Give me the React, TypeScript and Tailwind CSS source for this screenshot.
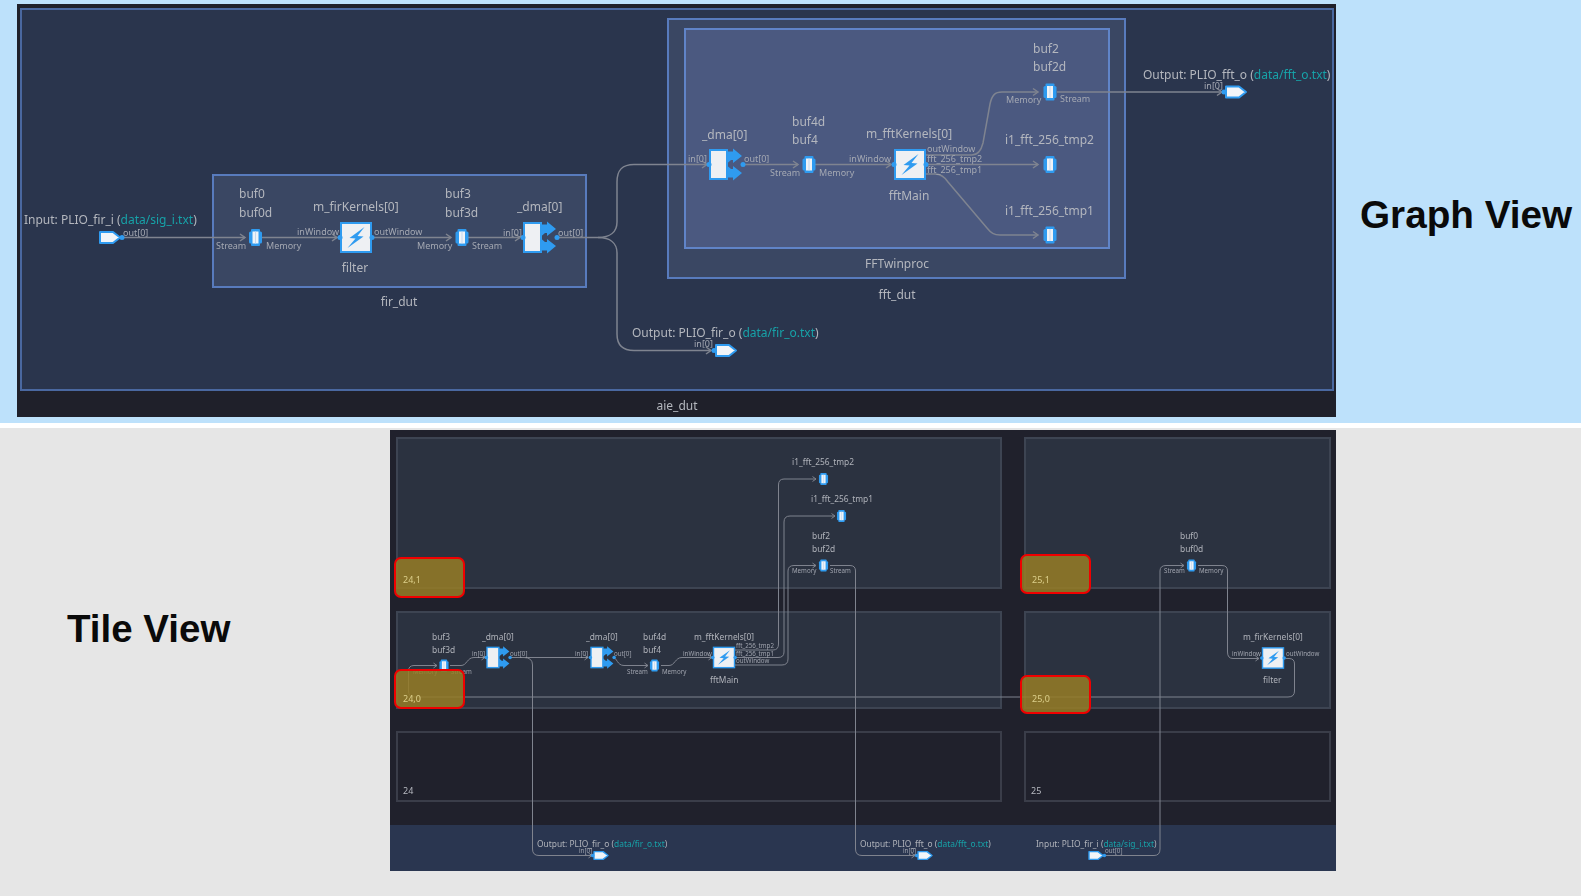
import React from "react";

type O = { x: number; y: number };
const GO: O = { x: 17, y: 4 };
const TO: O = { x: 390, y: 430 };
const BLUE = "#2f9bf0";

function Buffer({ x, y, s = 1 }: { x: number; y: number; s?: number }) {
  return (
    <g transform={`translate(${x} ${y}) scale(${s})`}>
      <rect x={-6.5} y={-6} width={13} height={12} rx={1.5} fill={BLUE} />
      <rect x={-4.5} y={-8.5} width={9} height={17} rx={1} fill={BLUE} />
      <rect x={-3} y={-6} width={6} height={12} fill="#eef3f8" />
      <rect x={-0.5} y={-6} width={1} height={12} fill="#c3d8ee" />
    </g>
  );
}

function Kernel({ x, y, s = 1 }: { x: number; y: number; s?: number }) {
  return (
    <g transform={`translate(${x} ${y}) scale(${s})`}>
      <rect x={-15} y={-14.5} width={30} height={29} fill="#eef0f3" stroke={BLUE} strokeWidth={2} />
      <path d="M8.5 -10.5 L-6.5 0.5 L-0.5 1 L-8.5 10.5 L7.5 -1 L1.5 -1.5 L8.5 -10.5 Z" fill={BLUE} />
      <circle cx={-16} cy={0} r={2.5} fill={BLUE} />
      <circle cx={16} cy={0} r={2.5} fill={BLUE} />
    </g>
  );
}

function Dma({ x, y, s = 1 }: { x: number; y: number; s?: number }) {
  return (
    <g transform={`translate(${x} ${y}) scale(${s})`}>
      <rect x={0} y={-14.5} width={17} height={29} fill="#eef0f3" stroke={BLUE} strokeWidth={2} />
      <circle cx={-1} cy={0} r={2.5} fill={BLUE} />
      <polygon points="17,-13 23,-13 23,-16 32,-8.5 23,-1.5 23,-4.5 21,-4.5 17,-1" fill={BLUE} />
      <polygon points="17,13 23,13 23,16 32,8.5 23,1.5 23,4.5 21,4.5 17,1" fill={BLUE} />
      <circle cx={33} cy={0} r={2.5} fill={BLUE} />
    </g>
  );
}

function Port({ x, y, s = 1, dir }: { x: number; y: number; s?: number; dir: "in" | "out" }) {
  return (
    <g transform={`translate(${x} ${y}) scale(${s})`}>
      <polygon points="0,-5.5 13,-5.5 20,0 13,5.5 0,5.5" fill="#f2f5f8" stroke={BLUE} strokeWidth={2} strokeLinejoin="round" />
      {dir === "in" ? <circle cx={22} cy={0} r={2.5} fill={BLUE} /> : <circle cx={-2} cy={0} r={2.5} fill={BLUE} />}
    </g>
  );
}

function Chev({ x, y, s = 1 }: { x: number; y: number; s?: number }) {
  return <path d={`M${x - 5 * s} ${y - 3.5 * s} L${x} ${y} L${x - 5 * s} ${y + 3.5 * s}`} fill="none" />;
}

function L({ t, x, y, o, cls, center }: { t: React.ReactNode; x: number; y: number; o: O; cls: string; center?: boolean }) {
  return (
    <div
      className={`absolute whitespace-nowrap leading-none ${cls}`}
      style={{ left: x - o.x, top: y - o.y, transform: center ? "translate(-50%,-50%)" : "translateY(-50%)" }}
    >
      {t}
    </div>
  );
}

function Frame({ x1, y1, x2, y2, o, cls }: { x1: number; y1: number; x2: number; y2: number; o: O; cls: string }) {
  return (
    <div
      className={`absolute border-2 ${cls}`}
      style={{ left: x1 - o.x, top: y1 - o.y, width: x2 - x1, height: y2 - y1 }}
    />
  );
}

function Pl({ a, b }: { a: string; b: string }) {
  return (
    <>
      {a} (<span className="text-[#17a2a8]">{b}</span>)
    </>
  );
}

const gBig: [string, number, number][] = [
  ["buf0", 239, 194], ["buf0d", 239, 213], ["m_firKernels[0]", 313, 207], ["buf3", 445, 194], ["buf3d", 445, 213],
  ["_dma[0]", 517, 207], ["_dma[0]", 702, 135], ["buf4d", 792, 122], ["buf4", 792, 140], ["m_fftKernels[0]", 866, 134],
  ["buf2", 1033, 49], ["buf2d", 1033, 67], ["i1_fft_256_tmp2", 1005, 140], ["i1_fft_256_tmp1", 1005, 211],
];
const gMid: [string, number, number][] = [
  ["filter", 355, 268], ["fir_dut", 399, 302], ["fftMain", 909, 196], ["FFTwinproc", 897, 264], ["fft_dut", 897, 295], ["aie_dut", 677, 406],
];
const gSmall: [string, number, number][] = [
  ["out[0]", 123, 232], ["Stream", 216, 245], ["Memory", 266, 245], ["inWindow", 297, 231], ["outWindow", 374, 231],
  ["Memory", 417, 245], ["Stream", 472, 245], ["in[0]", 503, 232], ["out[0]", 558, 232], ["in[0]", 694, 343],
  ["in[0]", 688, 158], ["out[0]", 744, 158], ["Stream", 770, 172], ["Memory", 819, 172], ["inWindow", 849, 158],
  ["outWindow", 927, 148], ["fft_256_tmp2", 927, 158], ["fft_256_tmp1", 927, 169], ["Memory", 1006, 99], ["Stream", 1060, 98], ["in[0]", 1204, 85],
];
const tBig: [string, number, number][] = [
  ["buf3", 432, 637], ["buf3d", 432, 650], ["_dma[0]", 482, 637], ["_dma[0]", 586, 637], ["buf4d", 643, 637], ["buf4", 643, 650],
  ["m_fftKernels[0]", 694, 637], ["fftMain", 710, 680], ["i1_fft_256_tmp2", 792, 462], ["i1_fft_256_tmp1", 811, 499],
  ["buf2", 812, 536], ["buf2d", 812, 549], ["buf0", 1180, 536], ["buf0d", 1180, 549], ["m_firKernels[0]", 1243, 637], ["filter", 1263, 680],
];
const tSmall: [string, number, number][] = [
  ["Memory", 413, 672], ["Stream", 451, 672], ["in[0]", 472, 654], ["out[0]", 510, 654], ["in[0]", 575, 654], ["out[0]", 614, 654],
  ["Stream", 627, 672], ["Memory", 662, 672], ["inWindow", 683, 654], ["fft_256_tmp2", 736, 646], ["fft_256_tmp1", 736, 654], ["outWindow", 736, 661],
  ["Memory", 792, 571], ["Stream", 830, 571], ["Stream", 1164, 571], ["Memory", 1199, 571], ["inWindow", 1232, 654], ["outWindow", 1286, 654],
  ["in[0]", 579, 851], ["in[0]", 903, 851], ["out[0]", 1105, 851],
];

function GraphWires() {
  return (
    <svg className="absolute inset-0" width={1319} height={413} viewBox="17 4 1319 413">
      <g fill="none" stroke="#7f8490" strokeWidth={1.5}>
        <path d="M121 237.5 H245" />
        <path d="M261 237.5 H337" />
        <path d="M373 237.5 H451" />
        <path d="M468 237.5 H520" />
        <path d="M556 237.5 H598 C610 237.5 617 232 617 222 V182 C617 170 622 164.5 634 164.5 H707" />
        <path d="M598 237.5 C610 237.5 617 243 617 253 V334 C617 345 622 350.5 634 350.5 H711" />
        <path d="M742 164.5 H798" />
        <path d="M815 164.5 H891" />
        <path d="M925 155 H972 C978 155 981 151 983 143 L990 104 C992 95 995 92 1002 92 H1038" />
        <path d="M925 164.5 H1038" />
        <path d="M925 174 H935 C940 174 944 176 948 182 L987 228 C991 233 994 235 1000 235 H1038" />
        <path d="M1057 92 H1222" />
        <Chev x={245} y={237.5} />
        <Chev x={337} y={237.5} />
        <Chev x={451} y={237.5} />
        <Chev x={520} y={237.5} />
        <Chev x={707} y={164.5} />
        <Chev x={711} y={350.5} />
        <Chev x={798} y={164.5} />
        <Chev x={891} y={164.5} />
        <Chev x={1038} y={92} />
        <Chev x={1038} y={164.5} />
        <Chev x={1038} y={235} />
        <Chev x={1222} y={92} />
      </g>
      <Port x={100} y={237.5} dir="in" />
      <Buffer x={255.5} y={237.5} />
      <Kernel x={356} y={237.5} />
      <Buffer x={462} y={237.5} />
      <Dma x={524} y={237.5} />
      <Dma x={710} y={164.5} />
      <Buffer x={809} y={164.5} />
      <Kernel x={910} y={164.5} />
      <Buffer x={1050} y={92} />
      <Buffer x={1050} y={164.5} />
      <Buffer x={1050} y={235} />
      <Port x={1226} y={92} dir="out" />
      <Port x={716} y={350.5} dir="out" />
    </svg>
  );
}

function TileWires() {
  return (
    <svg className="absolute inset-0" width={946} height={441} viewBox="390 430 946 441">
      <g fill="none" stroke="#7f838e" strokeWidth={1}>
        <path d="M1286 658.5 H1289 Q1294.5 658.5 1294.5 664 V691 Q1294.5 697 1288 697 H414 Q408.5 697 408.5 691 V671 Q408.5 665.5 414 665.5 H437" />
        <path d="M450 665.5 H461 C467 665.5 467 657.5 474 657.5 H485" />
        <path d="M509 657.5 H588" />
        <path d="M524 657.5 Q532.5 657.5 532.5 665 V849 Q532.5 855.5 539 855.5 H592" />
        <path d="M613 657.5 C617 657.5 617 665.5 624 665.5 H648" />
        <path d="M661 665.5 H669 C675 665.5 675 657.5 682 657.5 H712" />
        <path d="M735 650 H773 Q778.5 650 778.5 644 V485 Q778.5 479 784 479 H816" />
        <path d="M735 657.5 H778 Q784 657.5 784 652 V522 Q784 516 790 516 H835" />
        <path d="M735 665 H782 Q788 665 788 659 V571 Q788 565.5 794 565.5 H816" />
        <path d="M830 565.5 H850 Q855.5 565.5 855.5 571 V849 Q855.5 855.5 862 855.5 H915" />
        <path d="M1104 855.5 H1154 Q1160 855.5 1160 849 V571 Q1160 565.5 1166 565.5 H1184" />
        <path d="M1198 565.5 H1222 Q1227.5 565.5 1227.5 571 V652 Q1227.5 658.5 1233 658.5 H1259" />
        <Chev x={437} y={665.5} s={0.7} />
        <Chev x={485} y={657.5} s={0.7} />
        <Chev x={588} y={657.5} s={0.7} />
        <Chev x={592} y={855.5} s={0.7} />
        <Chev x={648} y={665.5} s={0.7} />
        <Chev x={712} y={657.5} s={0.7} />
        <Chev x={816} y={479} s={0.7} />
        <Chev x={835} y={516} s={0.7} />
        <Chev x={816} y={565.5} s={0.7} />
        <Chev x={915} y={855.5} s={0.7} />
        <Chev x={1184} y={565.5} s={0.7} />
        <Chev x={1259} y={658.5} s={0.7} />
      </g>
      <Buffer x={444} y={665.5} s={0.7} />
      <Dma x={487} y={657.5} s={0.7} />
      <Dma x={591} y={657.5} s={0.7} />
      <Buffer x={654.5} y={665.5} s={0.7} />
      <Kernel x={724} y={657.5} s={0.7} />
      <Buffer x={823.5} y={479} s={0.7} />
      <Buffer x={841.5} y={516} s={0.7} />
      <Buffer x={823.5} y={565.5} s={0.7} />
      <Buffer x={1191.5} y={565.5} s={0.7} />
      <Kernel x={1273} y={658} s={0.7} />
      <Port x={1089} y={855.5} s={0.7} dir="in" />
      <Port x={594} y={855.5} s={0.7} dir="out" />
      <Port x={918} y={855.5} s={0.7} dir="out" />
    </svg>
  );
}

function Highlight({ x1, y1, x2, y2, label, cls }: { x1: number; y1: number; x2: number; y2: number; label: string; cls: string }) {
  return (
    <div
      className={`absolute flex items-end border-[2.5px] border-[#f00000] rounded-[7px] bg-[#977d26]/85 text-[9px] leading-none text-[#dccf8a] ${cls}`}
      style={{ left: x1 - TO.x, top: y1 - TO.y, width: x2 - x1, height: y2 - y1 }}
    >
      {label}
    </div>
  );
}

function Tile({ label, dark }: { label?: string; dark?: boolean }) {
  return (
    <div
      className={
        dark
          ? "flex items-end border-2 border-[#3a3d49] bg-[#20212c] pl-[5px] pb-[5px] text-[9px] leading-none text-[#b6b9c0]"
          : "flex items-end border-2 border-[#3d4452] bg-[#2b3240] pl-[5px] pb-[5px] text-[9px] leading-none text-[#b6b9c0]"
      }
    >
      {label}
    </div>
  );
}

export default function App() {
  return (
    <div className="flex h-[896px] w-[1581px] flex-col bg-white font-['Noto_Sans',sans-serif]">
      <section className="flex h-[423px] items-start bg-[#bde1fb] pl-[17px] pt-[4px]">
        <div className="relative flex h-[413px] w-[1319px] flex-col bg-[#1f202a] text-[#b4b7be] blur-[0.6px]">
          <div className="ml-[3px] mr-[2px] mt-[4px] h-[383px] border-2 border-[#4a68a0] bg-[#2a354d]" />
          <Frame x1={212} y1={174} x2={587} y2={288} o={GO} cls="border-[#587bbd] bg-[#3a4763]" />
          <Frame x1={667} y1={18} x2={1126} y2={279} o={GO} cls="border-[#587bbd] bg-[#3a4763]" />
          <Frame x1={684} y1={28} x2={1110} y2={249} o={GO} cls="border-[#6084c8] bg-[#4b5980]" />
          <GraphWires />
          {gBig.map(([t, x, y], i) => (
            <L key={i} t={t} x={x} y={y} o={GO} cls="text-[12px] text-[#b4b7be]" />
          ))}
          {gMid.map(([t, x, y], i) => (
            <L key={i} t={t} x={x} y={y} o={GO} center cls="text-[12px] text-[#b4b7be]" />
          ))}
          {gSmall.map(([t, x, y], i) => (
            <L key={i} t={t} x={x} y={y} o={GO} cls="text-[9px] text-[#a4a8b2]" />
          ))}
          <L t={<Pl a="Input: PLIO_fir_i" b="data/sig_i.txt" />} x={24} y={220} o={GO} cls="text-[12px] text-[#b4b7be]" />
          <L t={<Pl a="Output: PLIO_fir_o" b="data/fir_o.txt" />} x={632} y={333} o={GO} cls="text-[12px] text-[#b4b7be]" />
          <L t={<Pl a="Output: PLIO_fft_o" b="data/fft_o.txt" />} x={1143} y={74.5} o={GO} cls="text-[12px] text-[#b4b7be]" />
        </div>
        <div className="ml-[24px] mt-[192px] whitespace-nowrap font-['Liberation_Sans',sans-serif] text-[38.7px] font-bold leading-none text-[#0a0a0a]">
          Graph View
        </div>
      </section>
      <div className="h-[5px] bg-white" />
      <section className="flex flex-1 items-start bg-[#e6e6e6] pt-[2px]">
        <div className="w-[390px] pl-[67px] pt-[180px] font-['Liberation_Sans',sans-serif] text-[38.5px] font-bold leading-none text-[#0a0a0a]">
          Tile View
        </div>
        <div className="relative flex h-[441px] w-[946px] flex-col bg-[#20212c] blur-[0.6px]">
          <div className="grid flex-1 grid-cols-[606px_307px] grid-rows-[152px_98px_71px] gap-x-[22px] gap-y-[22px] pl-[6px] pt-[7px]">
            <Tile />
            <Tile />
            <Tile />
            <Tile />
            <Tile dark label="24" />
            <Tile dark label="25" />
          </div>
          <div className="h-[46px] bg-[#2a3650]" />
          <TileWires />
          {tBig.map(([t, x, y], i) => (
            <L key={i} t={t} x={x} y={y} o={TO} cls="text-[8.4px] text-[#b0b3ba]" />
          ))}
          {tSmall.map(([t, x, y], i) => (
            <L key={i} t={t} x={x} y={y} o={TO} cls="text-[6.2px] text-[#a0a4ae]" />
          ))}
          <L t={<Pl a="Output: PLIO_fir_o" b="data/fir_o.txt" />} x={537} y={844} o={TO} cls="text-[8.4px] text-[#b0b3ba]" />
          <L t={<Pl a="Output: PLIO_fft_o" b="data/fft_o.txt" />} x={860} y={844} o={TO} cls="text-[8.4px] text-[#b0b3ba]" />
          <L t={<Pl a="Input: PLIO_fir_i" b="data/sig_i.txt" />} x={1036} y={844} o={TO} cls="text-[8.4px] text-[#b0b3ba]" />
          <Highlight x1={394} y1={557} x2={465} y2={598} label="24,1" cls="pl-[7px] pb-[12px]" />
          <Highlight x1={394} y1={669} x2={465} y2={709} label="24,0" cls="pl-[7px] pb-[4px]" />
          <Highlight x1={1020} y1={554} x2={1091} y2={594} label="25,1" cls="pl-[10px] pb-[8px]" />
          <Highlight x1={1020} y1={675} x2={1091} y2={714} label="25,0" cls="pl-[10px] pb-[9px]" />
        </div>
      </section>
    </div>
  );
}
